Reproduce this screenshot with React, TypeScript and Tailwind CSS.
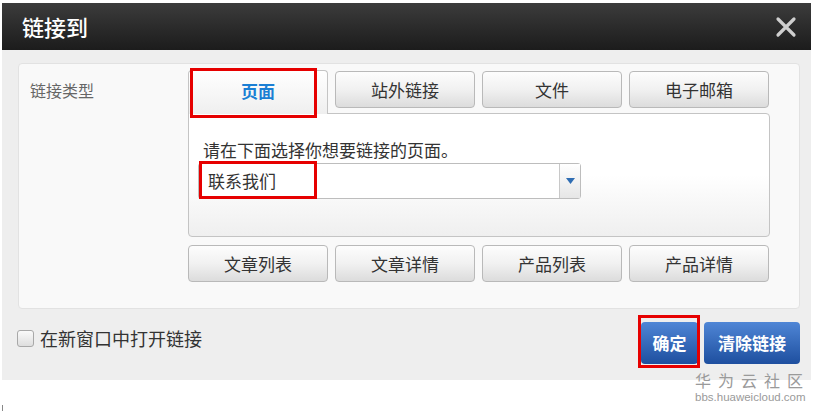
const font = "font-['Noto_Sans_CJK_SC','Noto_Sans',sans-serif]";

const tabs = ["站外链接", "文件", "电子邮箱"];
const subLinks = ["文章列表", "文章详情", "产品列表", "产品详情"];

function GrayButton({ label, className = "" }: { label: string; className?: string }) {
  return (
    <div
      className={`flex h-[37px] w-[140px] items-center justify-center rounded-[4px] border border-[#b9b9b9] bg-gradient-to-b from-[#fdfdfd] via-[#f1f1f1] to-[#dcdcdc] text-[17px] text-[#333] ${className}`}
    >
      {label}
    </div>
  );
}

function RedBox({ className }: { className: string }) {
  return <div className={`pointer-events-none absolute border-[3px] border-[#e60000] ${className}`} />;
}

export default function App() {
  return (
    <div className={`relative h-[411px] w-[817px] overflow-hidden bg-white ${font}`}>
      <div className="ml-[2px] mt-[3px] flex h-[377px] w-[809px] flex-col bg-[#eeeeee]">
        {/* header */}
        <div className="flex h-[47px] items-center justify-between bg-gradient-to-b from-[#3c3c3c] to-[#1c1c1c] pl-[20px] pr-[14px]">
          <span className="text-[22px] font-medium text-white">链接到</span>
          <svg width="22" height="22" viewBox="0 0 22 22" className="mt-[1px]">
            <path d="M3 3 L19 19 M19 3 L3 19" stroke="#cfcfcf" strokeWidth="3.2" strokeLinecap="round" />
          </svg>
        </div>

        {/* panel */}
        <div className="ml-[16px] mr-[11px] mt-[13px] flex h-[246px] rounded-[4px] border border-[#e2e2e2] bg-[#f9f9f9]">
          <div className="w-[169px] pl-[11px] pt-[14px] text-[16px] text-[#666]">链接类型</div>
          <div className="flex w-[582px] flex-col pt-[6px]">
            <div className="flex h-[43px] items-start gap-[7px]">
              <div className="relative z-10 flex h-[44px] w-[140px] items-center justify-center rounded-t-[4px] border border-b-0 border-[#c4c4c4] bg-gradient-to-b from-white to-[#efefef] pb-[3px] text-[17px] font-bold text-[#1b7fd4]">
                页面
                <RedBox className="left-[1px] top-[-3px] h-[50px] w-[127px]" />
              </div>
              {tabs.map((t) => (
                <GrayButton key={t} label={t} className="mt-[1px]" />
              ))}
            </div>
            <div className="h-[124px] rounded-b-[4px] rounded-tr-[4px] border border-[#c4c4c4] bg-gradient-to-b from-white via-white to-[#efefef] pl-[14px] pt-[26px]">
              <div className="text-[17px] leading-[20px] text-[#333]">请在下面选择你想要链接的页面。</div>
              <div className="relative ml-[-5px] mt-[3px] flex h-[36px] w-[383px] rounded-[3px] border border-[#bdbdbd] bg-white">
                <div className="flex flex-1 items-center pl-[9px] text-[17px] text-[#333]">联系我们</div>
                <div className="flex w-[21px] items-center justify-center border-l border-[#c8c8c8] bg-gradient-to-b from-white to-[#e6e6e6]">
                  <svg width="9" height="6" viewBox="0 0 9 6">
                    <path d="M0 0 H9 L4.5 6 Z" fill="#2f6db3" />
                  </svg>
                </div>
                <RedBox className="left-[0px] top-[-3px] h-[38px] w-[118px]" />
              </div>
            </div>
            <div className="mt-[8px] flex gap-[7px]">
              {subLinks.map((t) => (
                <GrayButton key={t} label={t} />
              ))}
            </div>
          </div>
        </div>

        {/* footer */}
        <div className="flex flex-1 items-start justify-between pl-[15px] pr-[11px] pt-[13px]">
          <label className="mt-[3px] flex items-center gap-[6px] text-[18px] text-[#333]">
            <span className="h-[17px] w-[17px] rounded-[3px] border border-[#a8a8a8] bg-gradient-to-b from-[#fafafa] to-[#dedede]" />
            在新窗口中打开链接
          </label>
          <div className="flex gap-[6px]">
            <div className="relative flex h-[42px] w-[57px] items-center justify-center rounded-[4px] bg-gradient-to-b from-[#4f86d6] to-[#1e4f9f] text-[17px] font-bold text-white">
              确定
              <RedBox className="left-[-3px] top-[-7px] h-[53px] w-[62px]" />
            </div>
            <div className="flex h-[42px] w-[96px] items-center justify-center rounded-[4px] bg-gradient-to-b from-[#4f86d6] to-[#1e4f9f] text-[17px] font-bold text-white">
              清除链接
            </div>
          </div>
        </div>
      </div>

      {/* watermark */}
      <div className="absolute left-[695px] top-[371px] flex flex-col items-start">
        <span className="whitespace-nowrap text-[16px] leading-[18px] tracking-[7px] text-[#9a9a9a]">华为云社区</span>
        <span className="mt-[2px] whitespace-nowrap font-['Liberation_Sans',sans-serif] text-[11.5px] leading-[12px] text-[#9a9a9a]">bbs.huaweicloud.com</span>
      </div>
      <div className="absolute left-[2px] top-[405px] h-[6px] w-[1px] bg-[#888]" />
    </div>
  );
}
